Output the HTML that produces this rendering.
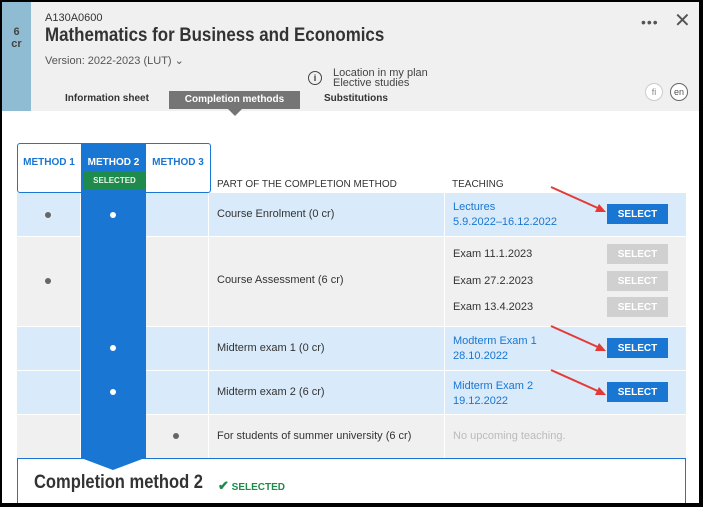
<!DOCTYPE html>
<html><head><style>
*{margin:0;padding:0;box-sizing:border-box}
body{width:703px;height:507px;background:#000;font-family:"Liberation Sans",sans-serif;position:relative;overflow:hidden}
.a{position:absolute}
.main{left:2px;top:2px;width:697px;height:501px;background:#fff;overflow:hidden}
.t{font-size:11px;color:#333;white-space:nowrap}
.btn{position:absolute;width:61px;height:20px;font-size:10px;font-weight:bold;color:#fff;background:#1976d2;text-align:center;line-height:21px}
.btn.g{background:#d0d0d0}
.dot{position:absolute;width:6px;height:6px;border-radius:50%;background:#666}
.dot.w{background:#fff}
.lnk{color:#1976d2;font-size:11px;line-height:15px;white-space:nowrap}
</style></head><body>
<div class="a main">
 <div class="a" style="left:0;top:0;width:697px;height:109px;background:#f0f0f0"></div>
 <div class="a" style="left:0;top:0;width:29px;height:109px;background:#8fbcd3;color:#444;font-size:11px;font-weight:bold;text-align:center;line-height:12px;padding-top:24px">6<br>cr</div>
 <div class="a t" style="left:43px;top:10px;font-size:11px">A130A0600</div>
 <div class="a" style="left:43px;top:23px;font-size:19px;font-weight:bold;color:#333;white-space:nowrap;transform:scaleX(0.89);transform-origin:0 0">Mathematics for Business and Economics</div>
 <div class="a t" style="left:43px;top:52px;font-size:11px;color:#555">Version: 2022-2023 (LUT) ⌄</div>
 <div class="a" style="left:306px;top:69px;width:14px;height:14px;border:1.3px solid #444;border-radius:50%;font-size:9px;font-weight:bold;text-align:center;line-height:12px;color:#333">i</div>
 <div class="a t" style="left:331px;top:66px;font-size:11px;line-height:10px;color:#444">Location in my plan<br>Elective studies</div>
 <div class="a" style="left:639px;top:12px;font-size:14px;color:#555;letter-spacing:1px">•••</div>
 <div class="a" style="left:672px;top:6px;font-size:20px;color:#555">✕</div>
 <div class="a" style="left:643px;top:81px;width:18px;height:18px;border:1px solid #ccc;border-radius:50%;background:#fff;font-size:9px;color:#888;text-align:center;line-height:16px">fi</div>
 <div class="a" style="left:668px;top:81px;width:18px;height:18px;border:1px solid #666;border-radius:50%;background:#fff;font-size:9px;color:#555;text-align:center;line-height:16px">en</div>
 <div class="a t" style="left:63px;top:91px;font-size:10px;font-weight:bold">Information sheet</div>
 <div class="a" style="left:167px;top:89px;width:131px;height:18px;background:#757575;color:#fff;font-size:10px;font-weight:bold;text-align:center;line-height:18px">Completion methods</div>
 <div class="a" style="left:226px;top:107px;border:7px solid transparent;border-top-color:#757575"></div>
 <div class="a t" style="left:322px;top:91px;font-size:10px;font-weight:bold">Substitutions</div>

 <div class="a" style="left:15px;top:191px;width:669px;height:43px;background:#d9eafa"></div>
 <div class="a" style="left:15px;top:235px;width:669px;height:89px;background:#f0f0f0"></div>
 <div class="a" style="left:15px;top:325px;width:669px;height:43px;background:#d9eafa"></div>
 <div class="a" style="left:15px;top:369px;width:669px;height:43px;background:#d9eafa"></div>
 <div class="a" style="left:15px;top:413px;width:669px;height:43px;background:#f0f0f0"></div>
 <div class="a" style="left:15px;top:234px;width:669px;height:1px;background:#fff"></div>
 <div class="a" style="left:15px;top:324px;width:669px;height:1px;background:#fff"></div>
 <div class="a" style="left:15px;top:368px;width:669px;height:1px;background:#fff"></div>
 <div class="a" style="left:15px;top:412px;width:669px;height:1px;background:#fff"></div>
 <div class="a" style="left:78px;top:191px;width:1px;height:265px;background:#fff"></div>
 <div class="a" style="left:143px;top:191px;width:1px;height:265px;background:#fff"></div>
 <div class="a" style="left:206px;top:191px;width:1px;height:265px;background:#fff"></div>
 <div class="a" style="left:442px;top:191px;width:1px;height:265px;background:#fff"></div>
 <div class="a" style="left:15px;top:141px;width:194px;height:50px;border:1px solid #1976d2;border-radius:3px"></div>
 <div class="a" style="left:79px;top:141px;width:65px;height:315px;background:#1976d2"></div>
 <div class="a" style="left:143px;top:141px;width:1px;height:50px;background:#1976d2"></div>
 <div class="a" style="left:16px;top:155px;width:62px;text-align:center;font-size:10px;font-weight:bold;color:#1976d2">METHOD 1</div>
 <div class="a" style="left:79px;top:155px;width:65px;text-align:center;font-size:10px;font-weight:bold;color:#fff">METHOD 2</div>
 <div class="a" style="left:81px;top:170px;width:63px;height:18px;background:#1e8a4c;color:#e8f5e9;font-size:8px;font-weight:bold;text-align:center;line-height:18px">SELECTED</div>
 <div class="a" style="left:144px;top:155px;width:64px;text-align:center;font-size:10px;font-weight:bold;color:#1976d2">METHOD 3</div>
 <div class="a t" style="left:215px;top:177px;font-size:10px">PART OF THE COMPLETION METHOD</div>
 <div class="a t" style="left:450px;top:177px;font-size:10px">TEACHING</div>
 <div class="dot" style="left:43px;top:210px"></div>
 <div class="dot w" style="left:108px;top:210px"></div>
 <div class="dot" style="left:43px;top:276px"></div>
 <div class="dot w" style="left:108px;top:343px"></div>
 <div class="dot w" style="left:108px;top:387px"></div>
 <div class="dot" style="left:171px;top:431px"></div>
 <div class="a t" style="left:215px;top:206px">Course Enrolment (0 cr)</div>
 <div class="a t" style="left:215px;top:272px">Course Assessment (6 cr)</div>
 <div class="a t" style="left:215px;top:340px">Midterm exam 1 (0 cr)</div>
 <div class="a t" style="left:215px;top:384px">Midterm exam 2 (6 cr)</div>
 <div class="a t" style="left:215px;top:428px">For students of summer university (6 cr)</div>
 <div class="a lnk" style="left:451px;top:198px">Lectures<br>5.9.2022–16.12.2022</div>
 <div class="a t" style="left:451px;top:246px">Exam 11.1.2023</div>
 <div class="a t" style="left:451px;top:273px">Exam 27.2.2023</div>
 <div class="a t" style="left:451px;top:299px">Exam 13.4.2023</div>
 <div class="a lnk" style="left:451px;top:332px">Modterm Exam 1<br>28.10.2022</div>
 <div class="a lnk" style="left:451px;top:377px">Midterm Exam 2<br>19.12.2022</div>
 <div class="a t" style="left:451px;top:428px;color:#bbb">No upcoming teaching.</div>
 <div class="btn" style="left:605px;top:202px">SELECT</div>
 <div class="btn g" style="left:605px;top:242px">SELECT</div>
 <div class="btn g" style="left:605px;top:269px">SELECT</div>
 <div class="btn g" style="left:605px;top:295px">SELECT</div>
 <div class="btn" style="left:605px;top:336px">SELECT</div>
 <div class="btn" style="left:605px;top:380px">SELECT</div>
 <svg class="a" style="left:540px;top:180px" width="70" height="220">
  <g stroke="#e53935" stroke-width="2" fill="#e53935">
   <line x1="9" y1="5" x2="58" y2="27"/><polygon points="64,30 53,30 57,22" stroke="none"/>
   <line x1="9" y1="144" x2="58" y2="166"/><polygon points="64,169 53,169 57,161" stroke="none"/>
   <line x1="9" y1="188" x2="58" y2="210"/><polygon points="64,213 53,213 57,205" stroke="none"/>
  </g>
 </svg>
 <div class="a" style="left:15px;top:456px;width:669px;height:60px;border:1px solid #1976d2;border-bottom:none"></div>
 <div class="a" style="left:79px;top:456px;border-left:32px solid transparent;border-right:32px solid transparent;border-top:12px solid #1976d2"></div>
 <div class="a" style="left:32px;top:470px;font-size:19px;font-weight:bold;color:#333;white-space:nowrap;transform:scaleX(0.87);transform-origin:0 0">Completion method 2</div>
 <div class="a" style="left:216px;top:476px;font-size:10px;font-weight:bold;color:#1e8a4c;white-space:nowrap"><span style="font-size:13px">✔</span> SELECTED</div>
</div>
</body></html>
